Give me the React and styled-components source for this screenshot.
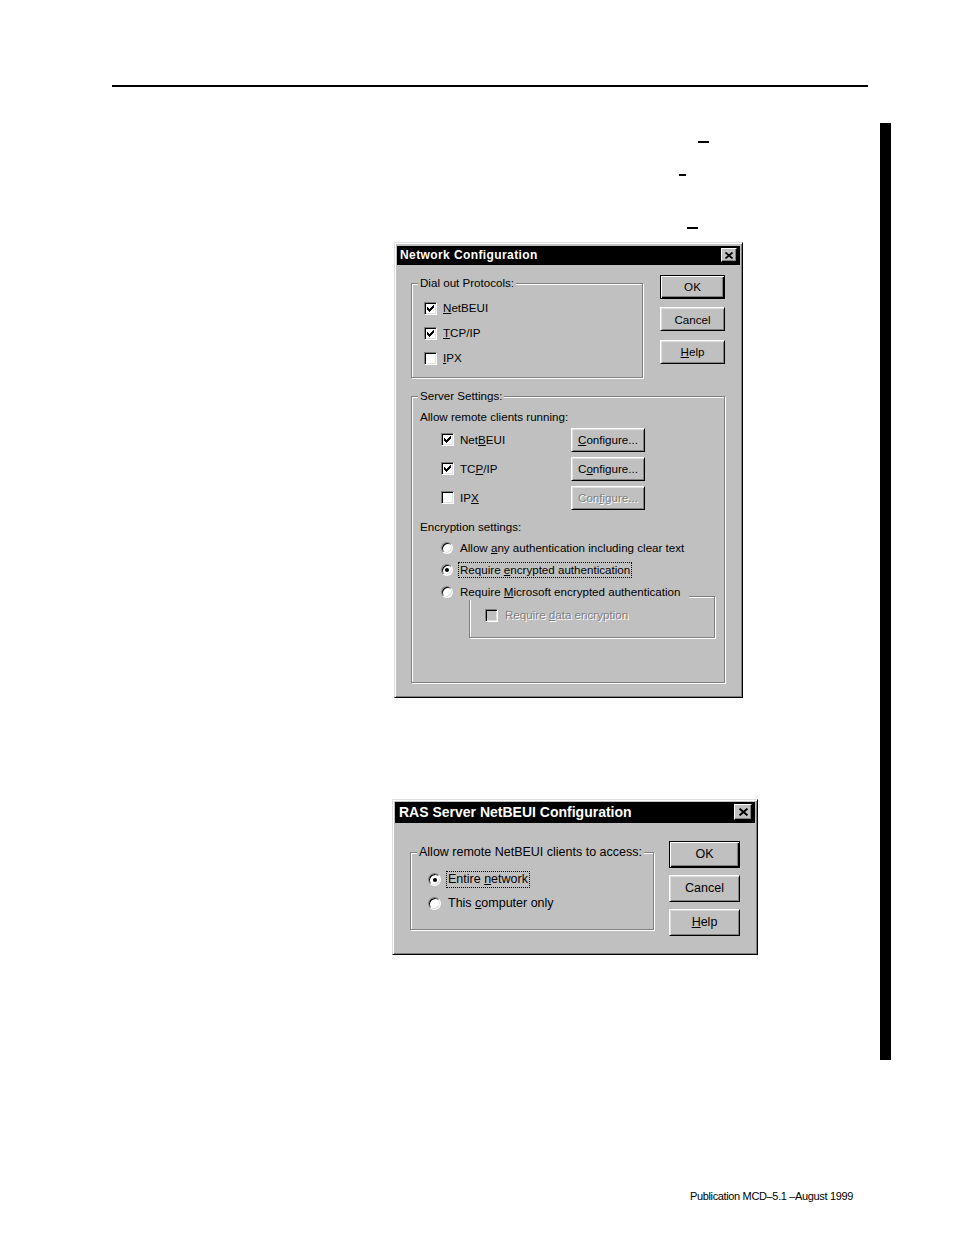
import React from 'react'
import styled, { createGlobalStyle, css } from 'styled-components'

const GlobalStyle = createGlobalStyle`
  html, body {
    margin: 0;
    padding: 0;
    background: #fff;
  }
  body {
    font-family: "Liberation Sans", Arial, sans-serif;
    color: #000;
  }
`

const Page = styled.div`
  width: 954px;
  height: 1235px;
  padding-top: 85px;
  box-sizing: border-box;
  background: #fff;
  overflow: hidden;
`

const HeaderRule = styled.div`
  margin-left: 112px;
  width: 756px;
  height: 2px;
  background: #000;
`

const Body = styled.div`
  display: flex;
  margin-top: 36px;
`

const Main = styled.div`
  flex: 0 0 880px;
  padding-top: 18px;
`

const SideBar = styled.div`
  width: 11px;
  height: 937px;
  background: #000;
`

const Mark = styled.div`
  width: ${p => p.$w}px;
  height: 1.5px;
  background: #000;
  margin-left: ${p => p.$left}px;
  margin-top: ${p => p.$top || 0}px;
`

const Footer = styled.div`
  margin-top: 129px;
  padding-right: 101px;
  text-align: right;
  font-size: 11px;
  line-height: 14px;
  letter-spacing: -0.35px;
`

/* ---------- Windows dialog parts ---------- */

const Window = styled.div`
  box-sizing: border-box;
  width: ${p => p.$w}px;
  height: ${p => p.$h}px;
  margin-left: ${p => p.$left}px;
  margin-top: ${p => p.$top}px;
  padding: 2px;
  background: #c0c0c0;
  border: 1px solid;
  border-color: #dfdfdf #000 #000 #dfdfdf;
  box-shadow: inset 1px 1px #fff, inset -1px -1px #808080;
  font-size: ${p => p.$fs}px;
  display: flex;
  flex-direction: column;
`

const TitleBar = styled.div`
  flex: none;
  height: ${p => p.$h}px;
  margin-top: ${p => p.$mt || 0}px;
  background: #000;
  color: #fff;
  font-weight: bold;
  font-size: ${p => p.$fs}px;
  letter-spacing: ${p => p.$ls || 0}px;
  display: flex;
  align-items: center;
  justify-content: space-between;
  padding-left: ${p => p.$pl}px;
  padding-right: ${p => p.$pr}px;
`

const CloseButton = styled.span`
  box-sizing: border-box;
  width: ${p => p.$w}px;
  height: ${p => p.$h}px;
  background: #c0c0c0;
  border: 1px solid;
  border-color: #fff #000 #000 #fff;
  box-shadow: inset -1px -1px #808080;
  display: flex;
  align-items: center;
  justify-content: center;
  letter-spacing: 0;
`

const Content = styled.div`
  flex: 1;
  padding: ${p => p.$pad};
`

const TopRow = styled.div`
  display: flex;
  justify-content: space-between;
  align-items: flex-start;
`

const Group = styled.div`
  position: relative;
  box-sizing: border-box;
  width: ${p => p.$w}px;
  height: ${p => p.$h}px;
  margin-top: ${p => p.$mt || 0}px;
  margin-left: ${p => p.$ml || 0}px;
  padding: ${p => p.$pt || 0}px 0 0 ${p => p.$pl || 0}px;
  border: 1px solid #808080;
  box-shadow: inset 1px 1px #fff, 1px 1px #fff;
`

const Legend = styled.span`
  position: absolute;
  top: -8px;
  left: 6px;
  padding: 0 2px;
  line-height: 14px;
  background: #c0c0c0;
  white-space: nowrap;
`

const ButtonColumn = styled.div`
  display: flex;
  flex-direction: column;
  gap: ${p => p.$gap}px;
`

const Button = styled.div`
  box-sizing: border-box;
  flex: none;
  width: ${p => p.$w}px;
  height: ${p => p.$h}px;
  background: #c0c0c0;
  display: flex;
  align-items: center;
  justify-content: center;
  border: 1px solid;
  ${p => p.$default
    ? css`
        border-color: #000;
        box-shadow: inset 1px 1px #fff, inset -1px -1px #000, inset -2px -2px #808080;
      `
    : css`
        border-color: #fff #000 #000 #fff;
        box-shadow: inset 1px 1px #dfdfdf, inset -1px -1px #808080;
      `}
  ${p => p.$disabled && css`
    color: #808080;
    text-shadow: 1px 1px #fff;
  `}
`

const Text = styled.div`
  line-height: 14px;
  margin-top: ${p => p.$mt || 0}px;
`

const OptionRow = styled.div`
  display: flex;
  align-items: center;
  height: ${p => p.$h}px;
  margin-left: ${p => p.$indent || 0}px;
  margin-top: ${p => p.$mt || 0}px;
  gap: ${p => p.$gap}px;
`

const Label = styled.span`
  box-sizing: border-box;
  flex: none;
  border: 1px dotted ${p => (p.$focus ? '#000' : 'transparent')};
  padding: 0 1px;
  line-height: ${p => p.$lh || 14}px;
  white-space: nowrap;
  ${p => p.$w && css`width: ${p.$w}px;`}
  ${p => p.$disabled && css`
    color: #808080;
    text-shadow: 1px 1px #fff;
  `}
  ${p => p.$cover && css`
    position: relative;
    z-index: 1;
    background: #c0c0c0;
    padding-right: 8px;
  `}
`

const U = styled.span`
  text-decoration: underline;
  text-underline-offset: 1px;
`

const Box = styled.span`
  box-sizing: border-box;
  flex: none;
  width: 13px;
  height: 13px;
  background: ${p => (p.$disabled ? '#c0c0c0' : '#fff')};
  border: 1px solid;
  border-color: #808080 #fff #fff #808080;
  box-shadow: inset 1px 1px #000, inset -1px -1px #dfdfdf;
  display: flex;
  align-items: center;
  justify-content: center;
`

const RadioDot = styled.span`
  box-sizing: border-box;
  flex: none;
  width: ${p => p.$size}px;
  height: ${p => p.$size}px;
  border-radius: 50%;
  background: #fff;
  border: 1px solid;
  border-color: #808080 #fff #fff #808080;
  box-shadow: inset 1px 1px #000, inset -1px -1px #dfdfdf;
  display: flex;
  align-items: center;
  justify-content: center;
  &::after {
    content: '';
    display: ${p => (p.$on ? 'block' : 'none')};
    width: 4px;
    height: 4px;
    border-radius: 50%;
    background: #000;
  }
`

const checkCols = [2, 3, 4, 3, 2, 1, 0]

const CheckGlyph = () => (
  <svg width="7" height="7" viewBox="0 0 7 7" shapeRendering="crispEdges">
    {checkCols.map((y, x) => (
      <rect key={x} x={x} y={y} width="1" height="3" fill="#000" />
    ))}
  </svg>
)

const CloseGlyph = ({ w, h }) => (
  <svg width={w} height={h} viewBox="0 0 8 7">
    <path d="M0.5 0.5 L7.5 6.5 M7.5 0.5 L0.5 6.5" stroke="#000" strokeWidth="1.7" fill="none" />
  </svg>
)

const Check = ({ on, disabled, children, gap = 4, ...rest }) => (
  <OptionRow $gap={gap} {...rest}>
    <Box $disabled={disabled}>{on && <CheckGlyph />}</Box>
    {children}
  </OptionRow>
)

const Radio = ({ on, size = 12, children, ...rest }) => (
  <OptionRow $gap={5} {...rest}>
    <RadioDot $on={on} $size={size} />
    {children}
  </OptionRow>
)

const NetworkConfiguration = () => (
  <Window $w={349} $h={456} $left={394} $top={13} $fs={11.6}>
    <TitleBar $h={19} $mt={1} $fs={12} $ls={0.4} $pl={3} $pr={3}>
      Network Configuration
      <CloseButton $w={16} $h={14}><CloseGlyph w={8} h={7} /></CloseButton>
    </TitleBar>
    <Content $pad="10px 15px 0 14px">
      <TopRow>
        <Group $w={232} $h={95} $mt={8} $pl={12} $pt={12}>
          <Legend>Dial out Protocols:</Legend>
          <Check $h={25} on><Label><U>N</U>etBEUI</Label></Check>
          <Check $h={25} on><Label><U>T</U>CP/IP</Label></Check>
          <Check $h={25}><Label><U>I</U>PX</Label></Check>
        </Group>
        <ButtonColumn $gap={8.5}>
          <Button $w={65} $h={24} $default>OK</Button>
          <Button $w={65} $h={24}>Cancel</Button>
          <Button $w={65} $h={24}><U>H</U>elp</Button>
        </ButtonColumn>
      </TopRow>
      <Group $w={314} $h={287} $mt={18} $pl={8} $pt={13}>
        <Legend>Server Settings:</Legend>
        <Text>Allow remote clients running:</Text>
        <Check $h={29} $indent={21} $mt={1.5} on>
          <Label $w={109}>Net<U>B</U>EUI</Label>
          <Button $w={74} $h={24}><U>C</U>onfigure...</Button>
        </Check>
        <Check $h={29} $indent={21} on>
          <Label $w={109}>TC<U>P</U>/IP</Label>
          <Button $w={74} $h={24}>C<U>o</U>nfigure...</Button>
        </Check>
        <Check $h={29} $indent={21}>
          <Label $w={109}>IP<U>X</U></Label>
          <Button $w={74} $h={24} $disabled>Con<U>f</U>igure...</Button>
        </Check>
        <Text $mt={8}>Encryption settings:</Text>
        <Radio $h={22} $indent={21} $mt={3}>
          <Label>Allow <U>a</U>ny authentication including clear text</Label>
        </Radio>
        <Radio $h={22} $indent={21} on>
          <Label $focus>Require <U>e</U>ncrypted authentication</Label>
        </Radio>
        <Radio $h={22} $indent={21}>
          <Label $cover>Require <U>M</U>icrosoft encrypted authentication</Label>
        </Radio>
        <Group $w={246} $h={42} $mt={-7} $ml={49} $pl={15} $pt={10}>
          <Check $h={16} gap={5} disabled>
            <Label $disabled>Require <U>d</U>ata encryption</Label>
          </Check>
        </Group>
      </Group>
    </Content>
  </Window>
)

const RasNetBEUIConfiguration = () => (
  <Window $w={366} $h={156} $left={392} $top={101} $fs={12.5}>
    <TitleBar $h={21} $fs={14} $pl={4} $pr={3}>
      RAS Server NetBEUI Configuration
      <CloseButton $w={18} $h={16}><CloseGlyph w={9} h={8} /></CloseButton>
    </TitleBar>
    <Content $pad="18px 15px 0 15px">
      <TopRow>
        <Group $w={244} $h={78} $mt={11} $pl={17} $pt={15}>
          <Legend>Allow remote NetBEUI clients to access:</Legend>
          <Radio $h={24} size={13} on>
            <Label $focus $lh={15}>Entire <U>n</U>etwork</Label>
          </Radio>
          <Radio $h={24} size={13}>
            <Label $lh={15}>This <U>c</U>omputer only</Label>
          </Radio>
        </Group>
        <ButtonColumn $gap={7}>
          <Button $w={71} $h={27} $default>OK</Button>
          <Button $w={71} $h={27}>Cancel</Button>
          <Button $w={71} $h={27}><U>H</U>elp</Button>
        </ButtonColumn>
      </TopRow>
    </Content>
  </Window>
)

export default function App() {
  return (
    <Page>
      <GlobalStyle />
      <HeaderRule />
      <Body>
        <Main>
          <Mark $w={11} $left={698} />
          <Mark $w={7} $left={679} $top={31.5} />
          <Mark $w={11} $left={687} $top={51.5} />
          <NetworkConfiguration />
          <RasNetBEUIConfiguration />
        </Main>
        <SideBar />
      </Body>
      <Footer>Publication MCD–5.1 –August 1999</Footer>
    </Page>
  )
}
